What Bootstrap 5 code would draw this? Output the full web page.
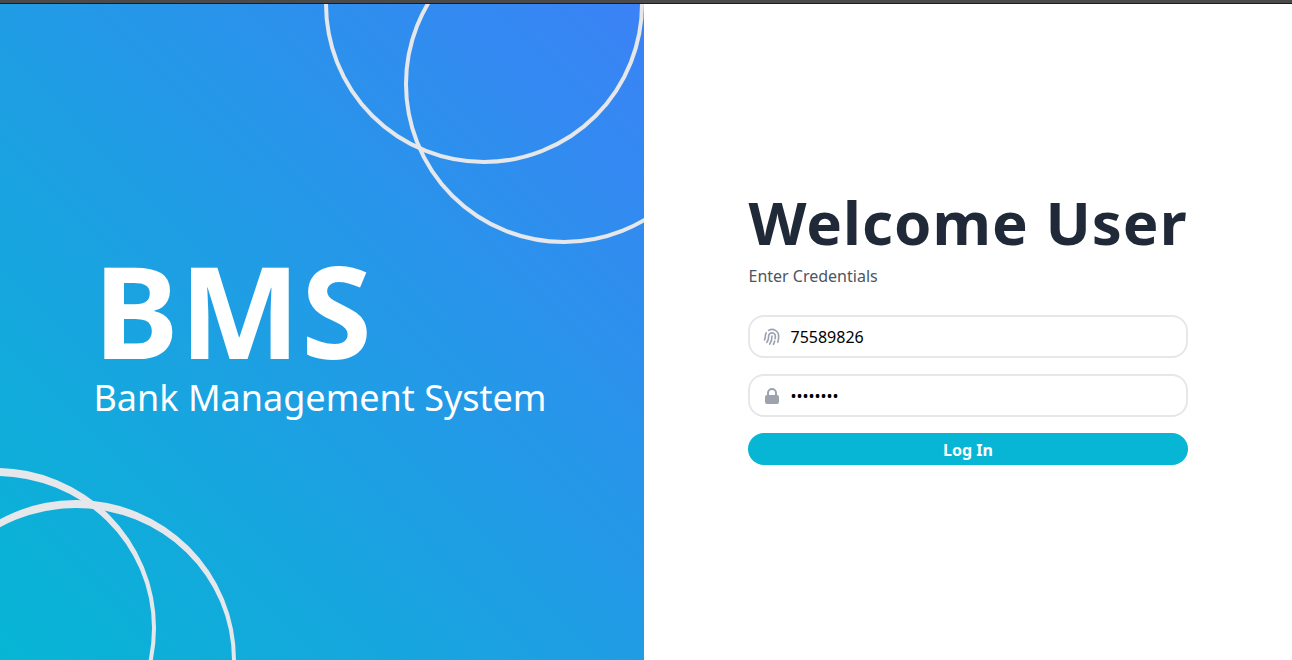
<!DOCTYPE html>
<html lang="en">
<head>
<meta charset="utf-8">
<meta name="viewport" content="width=device-width, initial-scale=1">
<title>Bank Management System</title>
<link href="https://cdn.jsdelivr.net/npm/bootstrap@5.3.0/dist/css/bootstrap.min.css" rel="stylesheet">
<style>
  body { font-family: "Noto Sans", sans-serif; line-height: 24px; }
  .top-strip { height: 4px; background: #4a4a4a; border-bottom: 1px solid #1c1c1c; }
  .brand-panel {
    flex: 0 0 calc(50% - 2px);
    padding-right: 4px;
    background: linear-gradient(to top right, #06b6d4, #3b82f6);
  }
  .brand-name { font-size: 128px; line-height: 128px; letter-spacing: 1px; margin-bottom: 4px; }
  .brand-sub { font-size: 36px; line-height: 40px; }
  .ring { position: absolute; width: 320px; height: 320px; border: 4px solid #e5e7eb; border-radius: 50%; }
  .ring-low { border-top-width: 8px; }
  .ring-a { left: -164px; bottom: -128px; }
  .ring-b { left: -84px; bottom: -160px; }
  .ring-c { right: 0; top: -160px; }
  .ring-d { right: -80px; top: -80px; }
  .login-form { padding-bottom: 7px; }
  .welcome { font-size: 60px; line-height: 60px; color: #1f2937; letter-spacing: 1px; margin-bottom: 12px; }
  .hint { color: #4b5563; margin-bottom: 27px; }
  .field { border: 2px solid #e5e7eb; border-radius: 16px; padding: 8px 12px; }
  .field svg { color: #9ca3af; }
  .field input { height: 23px; padding: 1px 0 0; line-height: 22px; font-size: 16px; color: #000; outline: 0; min-width: 0; background: transparent; }
  .login-btn { height: 32px; padding: 5px 4px 3px; line-height: 24px; border: 0; border-radius: 16px; font-weight: 700; color: #fff; background: #06b6d4; }
  .login-btn:hover { color: #fff; background: #0891b2; }
</style>
</head>
<body class="min-vh-100 d-flex flex-column bg-white">
<div class="top-strip"></div>
<main class="d-flex flex-grow-1">
  <section class="brand-panel position-relative overflow-hidden d-flex align-items-center justify-content-center text-white">
    <div>
      <h1 class="brand-name fw-bold">BMS</h1>
      <p class="brand-sub mb-0">Bank Management System</p>
    </div>
    <div class="ring ring-low ring-a"></div>
    <div class="ring ring-low ring-b"></div>
    <div class="ring ring-c"></div>
    <div class="ring ring-d"></div>
  </section>
  <section class="flex-fill d-flex align-items-center justify-content-center">
    <form class="login-form">
      <h2 class="welcome fw-bold">Welcome User</h2>
      <p class="hint">Enter Credentials</p>
      <div class="field d-flex align-items-center mb-3">
        <label for="userId" class="d-flex" aria-label="User ID">
          <svg width="20" height="20" viewBox="0 0 24 24" fill="none" stroke="currentColor" stroke-width="2" stroke-linecap="round" stroke-linejoin="round" aria-hidden="true"><path d="M12 11c0 3.517-1.009 6.799-2.753 9.571m-3.44-2.04l.054-.09A13.916 13.916 0 008 11a4 4 0 118 0c0 1.017-.07 2.019-.203 3m-2.118 6.844A21.88 21.88 0 0015.171 17m3.839 1.132c.645-2.266.99-4.659.99-7.132A8 8 0 008 4.07M3 15.364c.64-1.319 1-2.8 1-4.364 0-1.457.39-2.823 1.07-4"/></svg>
        </label>
        <input id="userId" type="text" value="75589826" class="border-0 ms-2 flex-fill">
      </div>
      <div class="field d-flex align-items-center mb-3">
        <label for="password" class="d-flex" aria-label="Password">
          <svg width="20" height="20" viewBox="0 0 20 20" fill="currentColor" aria-hidden="true"><path fill-rule="evenodd" clip-rule="evenodd" d="M5 9V7a5 5 0 0110 0v2a2 2 0 012 2v5a2 2 0 01-2 2H5a2 2 0 01-2-2v-5a2 2 0 012-2zm8-2v2H7V7a3 3 0 016 0z"/></svg>
        </label>
        <input id="password" type="password" value="password" class="border-0 ms-2 flex-fill">
      </div>
      <button type="submit" class="btn login-btn w-100">Log In</button>
    </form>
  </section>
</main>
<script src="https://cdn.jsdelivr.net/npm/bootstrap@5.3.0/dist/js/bootstrap.bundle.min.js"></script>
</body>
</html>
